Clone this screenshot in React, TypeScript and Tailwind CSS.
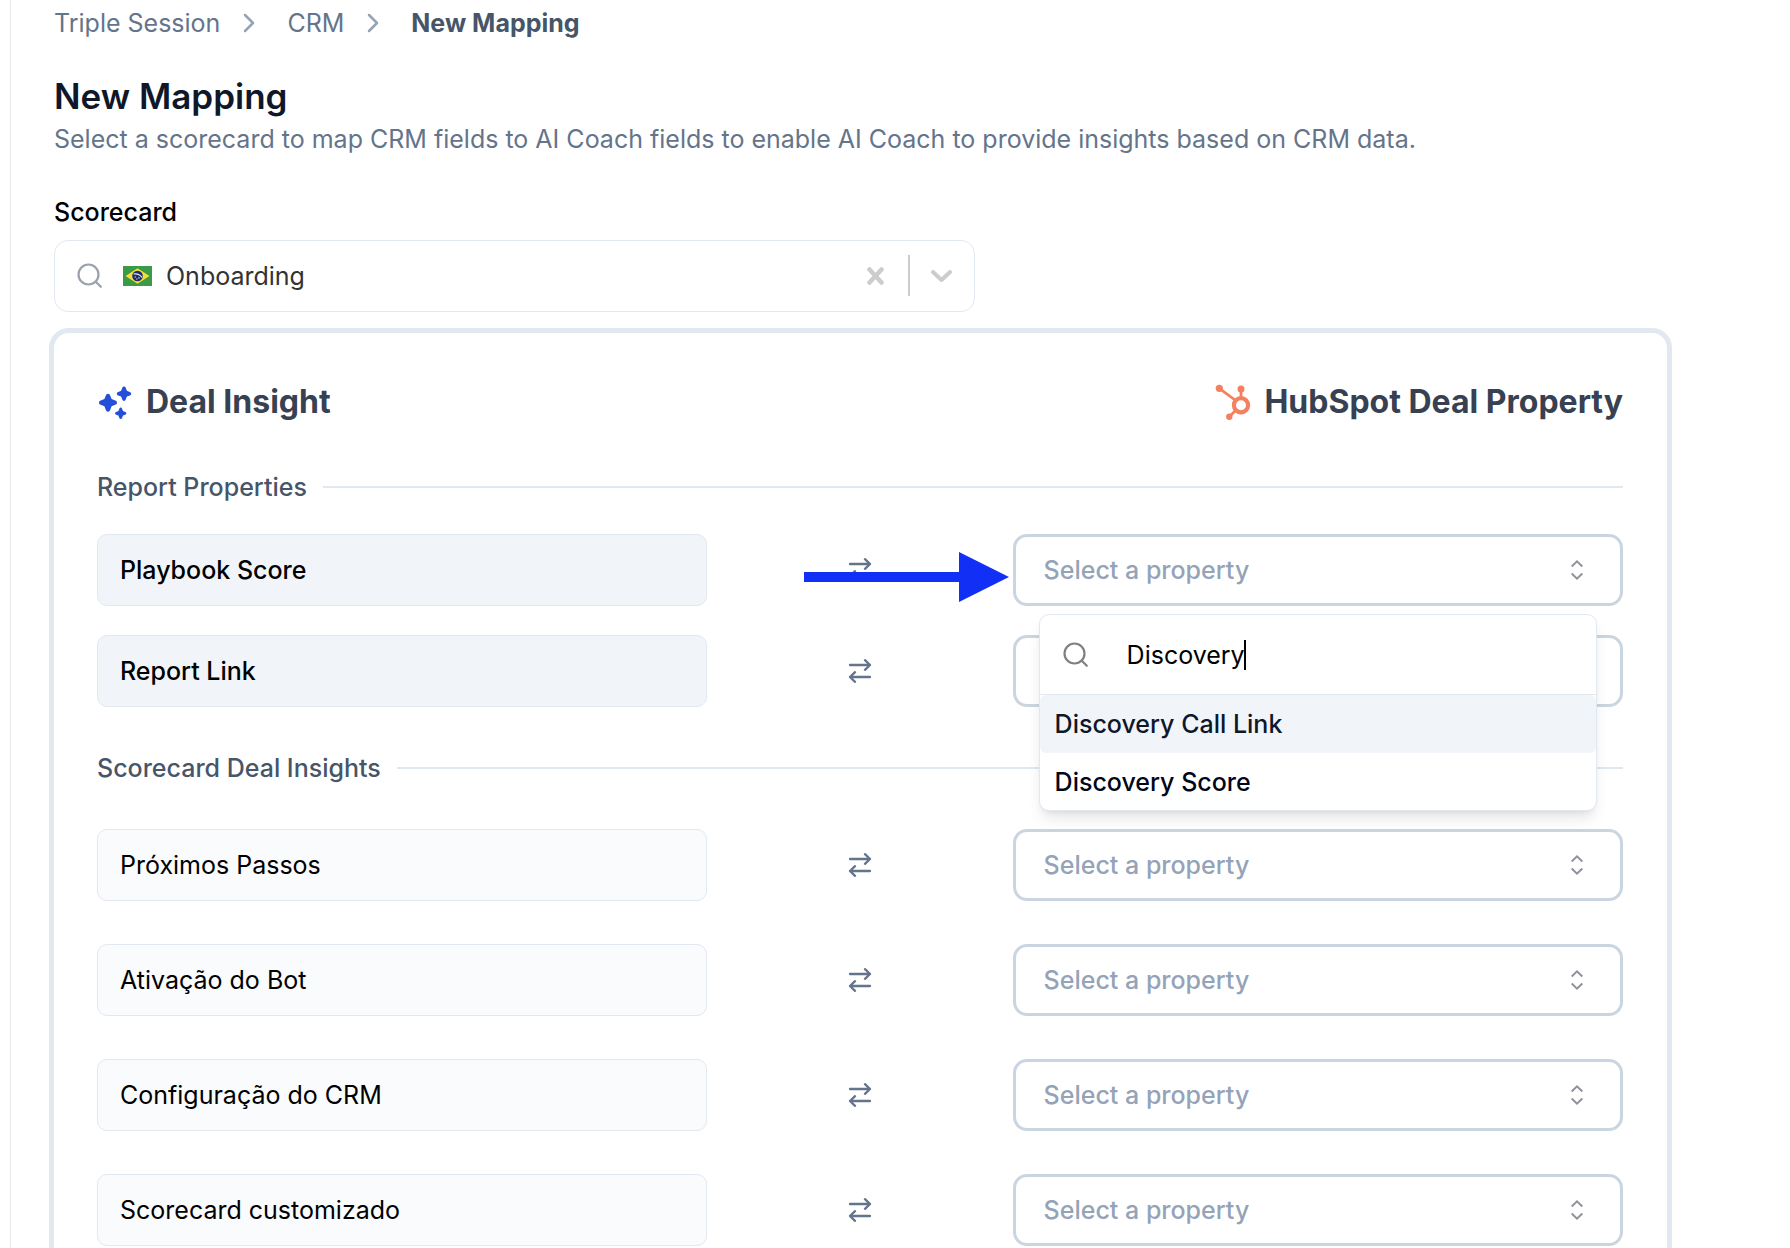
import React, { useState } from "react";

const options = ["Discovery Call Link", "Discovery Score"];
const reportRows = ["Playbook Score", "Report Link"];
const insightRows = ["Próximos Passos", "Ativação do Bot", "Configuração do CRM", "Scorecard customizado"];

function Crumb() {
  return (
    <svg className="h-5 w-3 text-[#94a3b8]" viewBox="0 0 12 20" fill="none" stroke="currentColor" strokeWidth="2.5" strokeLinecap="round" strokeLinejoin="round" aria-hidden="true">
      <path d="M2 2l8 8-8 8" />
    </svg>
  );
}

function Magnifier({ className }: { className: string }) {
  return (
    <svg className={className} viewBox="0 0 26 26" fill="none" stroke="currentColor" strokeWidth="2.2" strokeLinecap="round" aria-hidden="true">
      <circle cx="11.5" cy="11.5" r="10" />
      <path d="M18.8 18.8l5 5" />
    </svg>
  );
}

const star =
  "M0-10c1.2 0 2 .8 2.4 1.9L4-4l4.100 1.600C9.200-2 10-1.200 10 0s-.8 2-1.900 2.400L4 4 2.400 8.100C2 9.200 1.200 10 0 10s-2-.8-2.400-1.900L-4 4-8.100 2.400C-9.200 2-10 1.200-10 0s.8-2 1.900-2.400L-4-4l1.600-4.100C-2-9.200-1.200-10 0-10z";

function Sparkles() {
  return (
    <svg className="h-9 w-9 text-[#2450d8]" viewBox="0 0 36 36" fill="currentColor" aria-hidden="true">
      <path d={star} transform="translate(11 18.700) scale(.9)" />
      <path d={star} transform="translate(27 9.700) scale(.72)" />
      <path d={star} transform="translate(23.700 29.300) scale(.57)" />
    </svg>
  );
}

function HubSpotMark() {
  return (
    <svg className="h-9 w-9 text-[#f4805f]" viewBox="0 0 36 36" fill="none" stroke="currentColor" aria-hidden="true">
      <circle cx="26" cy="21.300" r="7.100" strokeWidth="4.200" />
      <path d="M4.300 4.300L20 16M26 5v10M20.500 26.500L14.500 32.500" strokeWidth="2.800" />
      <g fill="currentColor" stroke="none">
        <circle cx="4.300" cy="4.300" r="3.600" />
        <circle cx="26" cy="4.900" r="3.500" />
        <circle cx="14.300" cy="32.700" r="3.200" />
      </g>
    </svg>
  );
}

function Swap() {
  return (
    <svg className="h-6 w-6 text-[#64748b]" viewBox="0 0 24 24" fill="none" stroke="currentColor" strokeWidth="2.300" strokeLinecap="round" strokeLinejoin="round" aria-hidden="true">
      <path d="M2 6h20M17 1.200L22 6l-5 4.800M22 18H2M7 13.200L2 18l5 4.800" />
    </svg>
  );
}

function BrazilFlag() {
  return (
    <svg className="h-5 w-[29px] shrink-0" viewBox="0 0 29 20" aria-hidden="true">
      <rect width="29" height="20" fill="#3a9a45" />
      <path d="M14.500 2.200L26.500 10 14.500 17.800 2.500 10z" fill="#f7dd35" />
      <circle cx="14.500" cy="10" r="5.300" fill="#1c2b6c" />
      <path d="M10.500 8q5.500-.8 8.500 3.400" fill="none" stroke="#e8ecf5" strokeWidth="1.200" />
      <path d="M11.500 11h1.500M13 13h1.500M15.200 11.800h1.500" stroke="#c3cce4" strokeWidth="1.200" />
    </svg>
  );
}

function PointerArrow() {
  return (
    <svg className="absolute top-[18px] right-1 z-10 h-[50px] w-[205px]" viewBox="0 0 205 50" fill="#1230f5" aria-hidden="true">
      <path d="M0 20H155V0L205 25 155 50V30H0z" />
    </svg>
  );
}

function PropertyMenu() {
  const [query, setQuery] = useState("Discovery");
  return (
    <div className="absolute inset-x-[26px] top-full z-20 mt-2 overflow-hidden rounded-[10px] border border-[#e2e8f0] bg-white shadow-lg">
      <div className="flex h-20 items-center gap-[38px] border-b border-[#e2e8f0] px-[23px]">
        <Magnifier className="h-[26px] w-[26px] shrink-0 text-[#808080]" />
        <div className="flex min-w-0 flex-1 items-center">
          <input
            aria-label="Search properties"
            className="field-sizing-content bg-transparent outline-none"
            value={query}
            onChange={(e) => setQuery(e.target.value)}
          />
          <span className="-ml-px h-[30px] w-0.5 bg-black" />
        </div>
      </div>
      <ul>
        {options.map((o, i) => (
          <li key={o}>
            <button
              type="button"
              className={
                i === 0
                  ? "block h-[58px] w-full rounded-md bg-[#f1f5f9] px-[15px] text-left font-medium text-[#0f172a]"
                  : "block h-[57px] w-full rounded-md px-[15px] text-left font-medium text-[#020617]"
              }
            >
              {o}
            </button>
          </li>
        ))}
      </ul>
    </div>
  );
}

function MappingRow({ name, strong = false, open = false }: { name: string; strong?: boolean; open?: boolean }) {
  const id = name.toLowerCase().replaceAll(" ", "-");
  return (
    <div className="grid grid-cols-[2fr_1fr_2fr]">
      <label
        htmlFor={id}
        className={
          strong
            ? "flex h-[72px] items-center rounded-[10px] border border-[#e2e8f0] bg-[#f1f5f9] px-[22px] font-medium"
            : "flex h-[72px] items-center rounded-[10px] border border-[#e2e8f0] bg-[#f9fbfd] px-[22px]"
        }
      >
        {name}
      </label>
      <div className="relative flex items-center justify-center">
        <Swap />
        {open && <PointerArrow />}
      </div>
      <div className="relative flex items-center">
        <select id={id} className="h-[72px] w-full appearance-none rounded-[14px] border-3 border-[#cbd5e1] bg-white px-7 font-medium text-[#94a3b8] outline-none">
          <option>Select a property</option>
        </select>
        <svg className="pointer-events-none absolute right-10 h-5 w-3 text-[#8f929c]" viewBox="0 0 12 20" fill="none" stroke="currentColor" strokeWidth="2" aria-hidden="true">
          <path d="M.7 6.500L6 1.400l5.300 5.100M.7 13.500L6 18.600l5.300-5.100" />
        </svg>
        {open && <PropertyMenu />}
      </div>
    </div>
  );
}

function SectionTitle({ children }: { children: React.ReactNode }) {
  return (
    <div className="flex items-center gap-4">
      <h3 className="font-medium text-[#475569]">{children}</h3>
      <div className="h-0.5 flex-1 bg-[#e2e8f0]" />
    </div>
  );
}

export default function App() {
  const [card, setCard] = useState("Onboarding");
  return (
    <div className="h-screen overflow-hidden bg-white pl-[10px] font-['Inter',sans-serif] text-[25px] leading-9 text-black">
      <main className="min-h-full border-l border-gray-200 pt-[5px] pr-[118px] pl-[38px]">
        <header className="pl-[5px]">
          <nav className="flex items-center text-[#64748b]" aria-label="Breadcrumb">
            <a href="#session">Triple Session</a>
            <span className="mr-8 ml-[23px]"><Crumb /></span>
            <a href="#crm">CRM</a>
            <span className="mr-8 ml-[23px]"><Crumb /></span>
            <span className="font-bold text-[#475569]" aria-current="page">New Mapping</span>
          </nav>
          <h1 className="mt-[33px] text-[35px] leading-11 font-semibold text-[#0f172a]">New Mapping</h1>
          <p className="mt-[3px] text-[#64748b]">
            Select a scorecard to map CRM fields to AI Coach fields to enable AI Coach to provide insights based on CRM data.
          </p>
          <label htmlFor="scorecard" className="mt-[37px] block font-medium">Scorecard</label>
          <div className="mt-2.5 flex h-[72px] w-[921px] max-w-full items-center rounded-[14px] border border-[#e2e8f0] pb-px pl-[22px]">
            <Magnifier className="h-[26px] w-[26px] shrink-0 text-gray-400" />
            <span className="mr-[14px] ml-5"><BrazilFlag /></span>
            <input
              id="scorecard"
              className="min-w-0 flex-1 bg-transparent text-[#333333] outline-none"
              value={card}
              onChange={(e) => setCard(e.target.value)}
            />
            <button type="button" aria-label="Clear" onClick={() => setCard("")} className="px-6 text-[#cccccc]">
              <svg className="h-[18px] w-[17px]" viewBox="0 0 17 18" fill="none" stroke="currentColor" strokeWidth="4.500" strokeLinecap="round" aria-hidden="true">
                <path d="M2.500 2.500l12 13M14.500 2.500l-12 13" />
              </svg>
            </button>
            <span className="h-[41px] w-0.5 bg-[#cccccc]" />
            <button type="button" aria-label="Open scorecards" className="pr-[22px] pl-[21px] text-[#cccccc]">
              <svg className="h-3 w-[21px]" viewBox="0 0 21 12" fill="none" stroke="currentColor" strokeWidth="4" strokeLinecap="round" strokeLinejoin="round" aria-hidden="true">
                <path d="M2 2l8.500 8L19 2" />
              </svg>
            </button>
          </div>
        </header>

        <section className="mt-4 rounded-[20px] border-5 border-[#e2e8f0] py-[45px] pr-11 pl-[43px]">
          <div className="flex items-center justify-between text-[32px] leading-12 font-bold text-[#374151]">
            <h2 className="flex items-center gap-[13px]">
              <Sparkles />
              Deal Insight
            </h2>
            <h2 className="flex items-center gap-[13px]">
              <HubSpotMark />
              HubSpot Deal Property
            </h2>
          </div>

          <div className="mt-[43px] flex flex-col gap-[29px]">
            <SectionTitle>Report Properties</SectionTitle>
            {reportRows.map((r, i) => (
              <MappingRow key={r} name={r} strong open={i === 0} />
            ))}
          </div>

          <div className="mt-[43px] flex flex-col gap-[43px]">
            <SectionTitle>Scorecard Deal Insights</SectionTitle>
            {insightRows.map((r) => (
              <MappingRow key={r} name={r} />
            ))}
          </div>
        </section>
      </main>
    </div>
  );
}
